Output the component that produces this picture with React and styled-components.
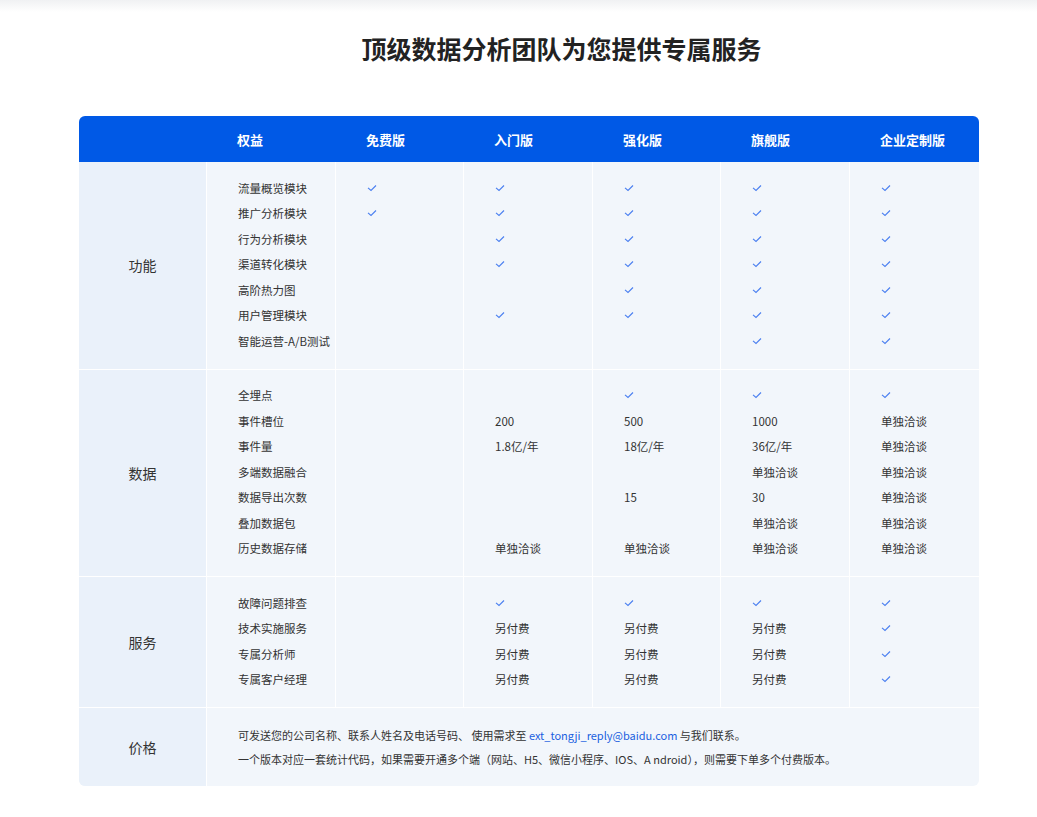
import React from "react";
import styled, { createGlobalStyle } from "styled-components";

const Global = createGlobalStyle`
  body { margin: 0; background: #fff; font-family: "Noto Sans CJK SC", "Noto Sans", sans-serif; color: #333; }
`;
const TopBar = styled.div`height: 12px; background: linear-gradient(#f0f1f3, #fff);`;
const Title = styled.h1`
  margin: 18px 0 0; text-align: center; font-size: 25px; font-weight: 700; color: #222; line-height: 36px; padding-left: 86px;
`;
const Table = styled.div`
  width: 900px; margin: 50px 0 0 79px; border-radius: 6px; overflow: hidden; background: #f2f6fb;
`;
const Cols = "127px 129px 128px 129px 128px 129px 130px";
const Header = styled.div`
  display: grid; grid-template-columns: ${Cols}; height: 46px; background: #0059e6; align-items: center;
`;
const HeadCell = styled.div`
  color: #fff; font-weight: 700; font-size: 13px; padding-left: ${p => p.$pl || 31}px;
`;
const Section = styled.div`
  display: grid; grid-template-columns: ${Cols}; border-top: ${p => (p.$first ? "none" : "1px solid #fff")};
`;
const Label = styled.div`
  background: #eaf1fa; display: flex; align-items: center; justify-content: center; font-size: 14px; color: #333;
`;
const Cell = styled.div`
  border-left: 1px solid #fff; padding: 13px 0 15px 31px; display: flex; flex-direction: column;
`;
const Line = styled.div`
  height: 25.5px; display: flex; align-items: center; font-size: 11.5px; color: #333;
`;
const PriceCell = styled.div`
  grid-column: 2 / 8; border-left: 1px solid #fff; padding: 15px 0 15px 31px; font-size: 11px; line-height: 24px; color: #333;
`;
const Link = styled.span`color: #1a5fe0;`;

const Check = () => (
  <svg width="10" height="8" viewBox="0 0 10 8"><path d="M1 3.8 L4 6.5 L9 1.5" fill="none" stroke="#4a7ff0" strokeWidth="1.1" /></svg>
);
const V = "✓";
const render = v => (v === V ? <Check /> : v);

const sections = [
  {
    label: "功能",
    rows: ["流量概览模块", "推广分析模块", "行为分析模块", "渠道转化模块", "高阶热力图", "用户管理模块", "智能运营-A/B测试"],
    cols: [
      [V, V, "", "", "", "", ""],
      [V, V, V, V, "", V, ""],
      [V, V, V, V, V, V, ""],
      [V, V, V, V, V, V, V],
      [V, V, V, V, V, V, V],
    ],
  },
  {
    label: "数据",
    rows: ["全埋点", "事件槽位", "事件量", "多端数据融合", "数据导出次数", "叠加数据包", "历史数据存储"],
    cols: [
      ["", "", "", "", "", "", ""],
      ["", "200", "1.8亿/年", "", "", "", "单独洽谈"],
      [V, "500", "18亿/年", "", "15", "", "单独洽谈"],
      [V, "1000", "36亿/年", "单独洽谈", "30", "单独洽谈", "单独洽谈"],
      [V, "单独洽谈", "单独洽谈", "单独洽谈", "单独洽谈", "单独洽谈", "单独洽谈"],
    ],
  },
  {
    label: "服务",
    rows: ["故障问题排查", "技术实施服务", "专属分析师", "专属客户经理"],
    cols: [
      ["", "", "", ""],
      [V, "另付费", "另付费", "另付费"],
      [V, "另付费", "另付费", "另付费"],
      [V, "另付费", "另付费", "另付费"],
      [V, V, V, V],
    ],
  },
];

export default function App() {
  return (
    <>
      <Global />
      <TopBar />
      <Title>顶级数据分析团队为您提供专属服务</Title>
      <Table>
        <Header>
          <div />
          {["权益", "免费版", "入门版", "强化版", "旗舰版", "企业定制版"].map(h => (
            <HeadCell key={h}>{h}</HeadCell>
          ))}
        </Header>
        {sections.map((s, i) => (
          <Section key={s.label} $first={i === 0}>
            <Label>{s.label}</Label>
            <Cell>{s.rows.map(r => <Line key={r}>{r}</Line>)}</Cell>
            {s.cols.map((c, j) => (
              <Cell key={j}>{c.map((v, k) => <Line key={k}>{render(v)}</Line>)}</Cell>
            ))}
          </Section>
        ))}
        <Section>
          <Label>价格</Label>
          <PriceCell>
            <div>可发送您的公司名称、联系人姓名及电话号码、 使用需求至 <Link>ext_tongji_reply@baidu.com</Link> 与我们联系。</div>
            <div>一个版本对应一套统计代码，如果需要开通多个端（网站、H5、微信小程序、IOS、A ndroid），则需要下单多个付费版本。</div>
          </PriceCell>
        </Section>
      </Table>
    </>
  );
}
